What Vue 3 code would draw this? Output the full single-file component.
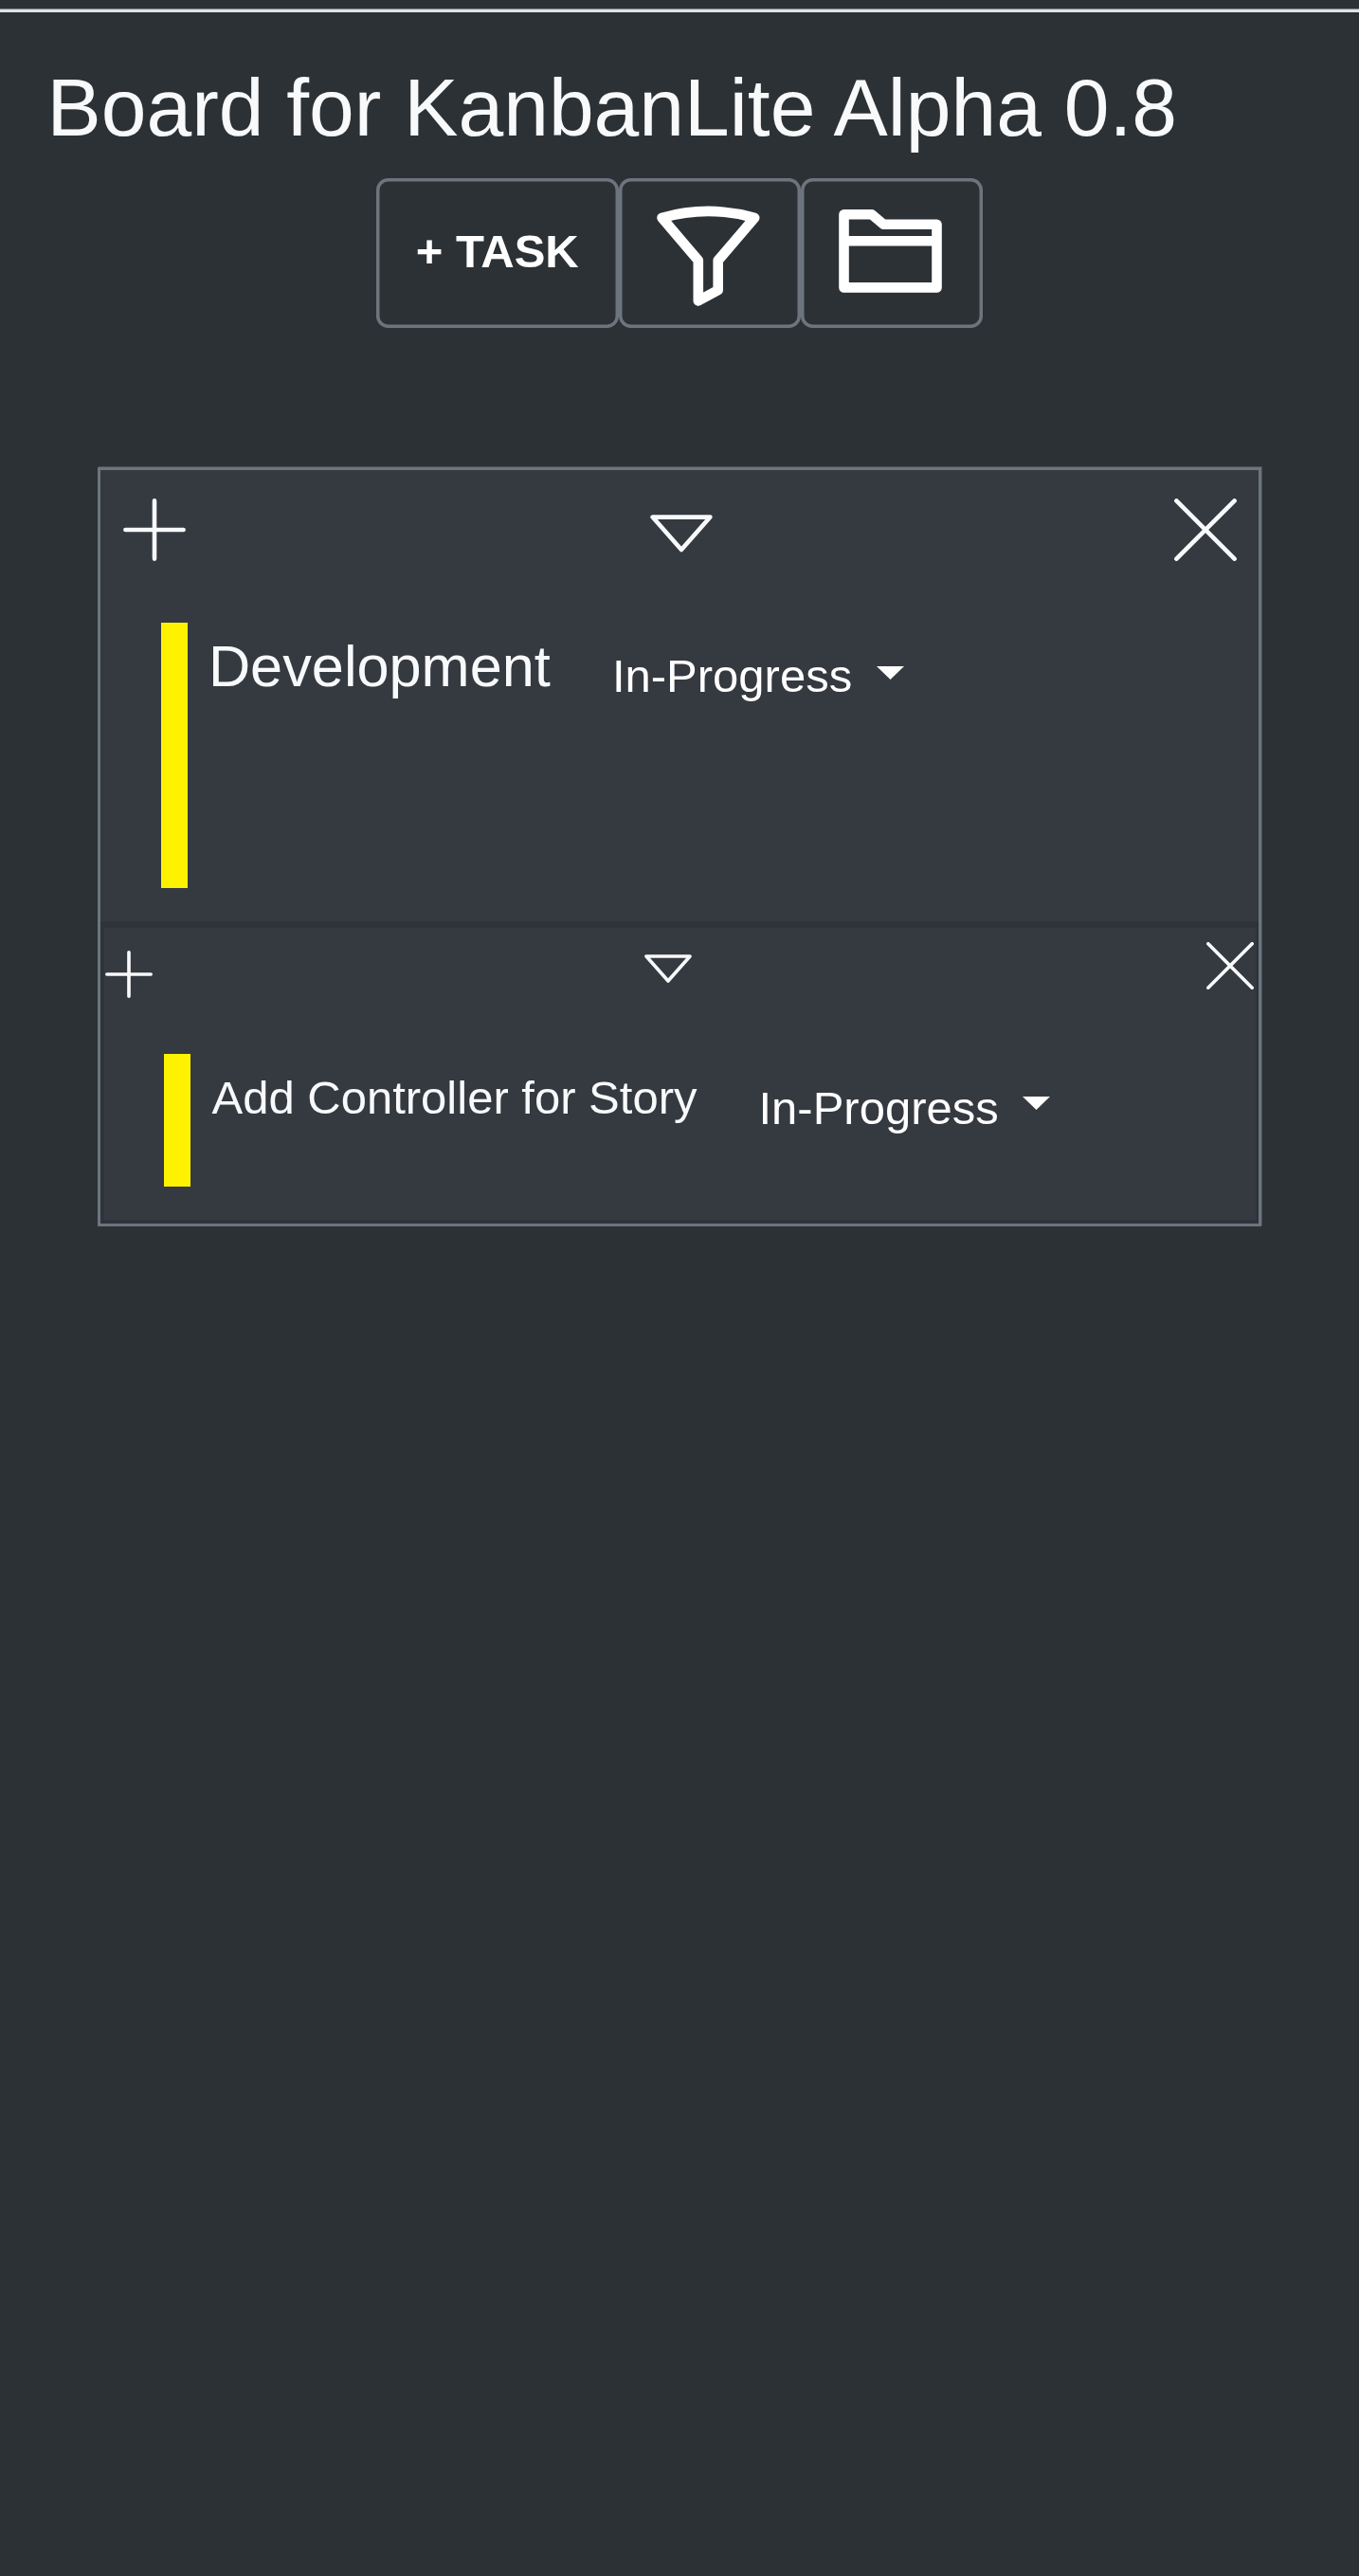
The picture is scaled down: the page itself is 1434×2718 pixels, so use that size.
<script setup>
const title = 'Board for KanbanLite Alpha 0.8'
const items = [
  { kind: 'story', name: 'Development', status: 'In-Progress' },
  { kind: 'task', name: 'Add Controller for Story', status: 'In-Progress' },
]
</script>

<template>
  <div class="page">
    <div class="navbar-edge"></div>
    <h1 class="title">{{ title }}</h1>
    <div class="toolbar">
      <button class="tool add">+ TASK</button>
      <button class="tool" aria-label="Filter">
        <svg class="tool-icon" viewBox="0 0 192 158">
          <path d="M45.5 41.8Q94.2 28 143.2 41.8L104.7 86.8V118.2L83.8 129.4V86.8Z" />
        </svg>
      </button>
      <button class="tool" aria-label="Projects">
        <svg class="tool-icon" viewBox="0 0 192 158">
          <path d="M45.5 38.3H74.8L87.3 48.8H143.5V115.4H45.5ZM45.5 66.3H143.5" />
        </svg>
      </button>
    </div>

    <div class="card">
      <section v-for="item in items" :key="item.kind" :class="['item', item.kind]">
        <header class="item-head">
          <svg class="glyph plus" viewBox="0 0 66 66"><path d="M33 2.4V63.6M2.4 33H63.6" /></svg>
          <svg class="glyph tri" viewBox="0 0 66 40"><path d="M2.6 2.6H63.4L33 37Z" /></svg>
          <svg class="glyph close" viewBox="0 0 66 66"><path d="M2.4 2.4L63.6 63.6M63.6 2.4L2.4 63.6" /></svg>
        </header>
        <div class="item-body">
          <div class="marker"></div>
          <div class="name">{{ item.name }}</div>
          <div class="status">{{ item.status }}</div>
          <svg class="caret" viewBox="0 0 29 14"><path d="M0 0H29L14.5 14Z" /></svg>
        </div>
      </section>
    </div>
  </div>
</template>

<style>
body {
  background: #2c3135;
}
</style>

<style scoped>
.page {
  height: 2718px;
  overflow: hidden;
  background: #2c3135;
  color: #f8f9fa;
  font-family: "Liberation Sans", Arial, sans-serif;
}
.navbar-edge {
  box-sizing: border-box;
  height: 13px;
  border-bottom: 3px solid #dee2e6;
  background: linear-gradient(#2c3135 9px, #85898d 9px);
  box-shadow: 0 14px 28px -8px rgba(45, 38, 48, 0.5);
}
.title {
  margin: 50px 0 0 49.5px;
  font-size: 85.8px;
  font-weight: 400;
  line-height: 100px;
  white-space: nowrap;
}
.toolbar {
  display: flex;
  margin: 25px 0 0 397px;
}
.tool {
  width: 192.3px;
  height: 157.5px;
  padding: 0;
  border: 0;
  border-radius: 12.5px;
  background: transparent;
  box-shadow: inset 0 0 0 3.5px #6c757d;
  color: #fff;
  font: bold 49px/73px "Liberation Sans", Arial, sans-serif;
}
.add {
  width: 255.5px;
  padding-bottom: 2.5px;
}
.tool-icon {
  display: block;
  width: 192px;
  height: 158px;
  margin-bottom: -0.5px;
  fill: none;
  stroke: #fff;
  stroke-width: 10.6;
  stroke-linejoin: round;
  stroke-linecap: round;
}
.card {
  box-sizing: border-box;
  width: 1228px;
  height: 801px;
  margin: 147.5px 0 0 103px;
  border: 3px solid #6c757d;
  box-shadow: 1px -1px 0 #495057;
  background: #353940;
}
.item {
  box-sizing: border-box;
}
.item-head,
.item-body {
  display: flex;
  align-items: flex-start;
}
.glyph {
  display: block;
  fill: none;
  stroke: #f8f9fa;
  stroke-width: 4.6;
  stroke-linecap: round;
  stroke-linejoin: round;
}
.plus,
.close {
  width: 66px;
  height: 66px;
}
.tri {
  width: 66px;
  height: 40px;
}
.marker {
  flex: none;
  width: 28px;
  background: #fff200;
}
.name,
.status {
  white-space: nowrap;
}
.status {
  color: #fff;
  font-size: 49px;
  line-height: 73px;
}
.caret {
  width: 29px;
  height: 14px;
  fill: #fff;
}

.story {
  height: 476px;
  padding-top: 30px;
}
.story .item-head {
  height: 131px;
  padding-left: 23.5px;
}
.story .tri {
  margin: 17px 0 0 490.5px;
}
.story .close {
  margin-left: 487px;
}
.story .item-body {
  padding-left: 63.6px;
}
.story .marker {
  height: 280px;
}
.story .name {
  width: 426px;
  margin: 6px 0 0 22.3px;
  font-size: 61.25px;
  line-height: 80px;
}
.story .status {
  width: 279px;
  margin-top: 20px;
}
.story .caret {
  margin-top: 45.5px;
}

.task {
  height: 319px;
  border: solid #2f333b;
  border-width: 7px 3px 4px 4px;
}
.task .item-head {
  height: 133px;
  padding: 15px 0 0 1.3px;
  box-sizing: border-box;
}
.task .glyph {
  stroke-width: 4.8;
}
.task .plus {
  width: 50px;
  height: 50px;
  margin-top: 9px;
}
.task .tri {
  width: 50px;
  height: 30.3px;
  margin: 13px 0 0 518.7px;
}
.task .close {
  width: 50px;
  height: 50px;
  margin-left: 543.3px;
}
.task .item-body {
  padding-left: 63px;
}
.task .marker {
  height: 140px;
}
.task .name {
  width: 577px;
  margin: 10px 0 0 22.5px;
  font-size: 49px;
  line-height: 73px;
}
.task .status {
  width: 278.5px;
  margin-top: 21px;
}
.task .caret {
  margin-top: 45.3px;
}
</style>
